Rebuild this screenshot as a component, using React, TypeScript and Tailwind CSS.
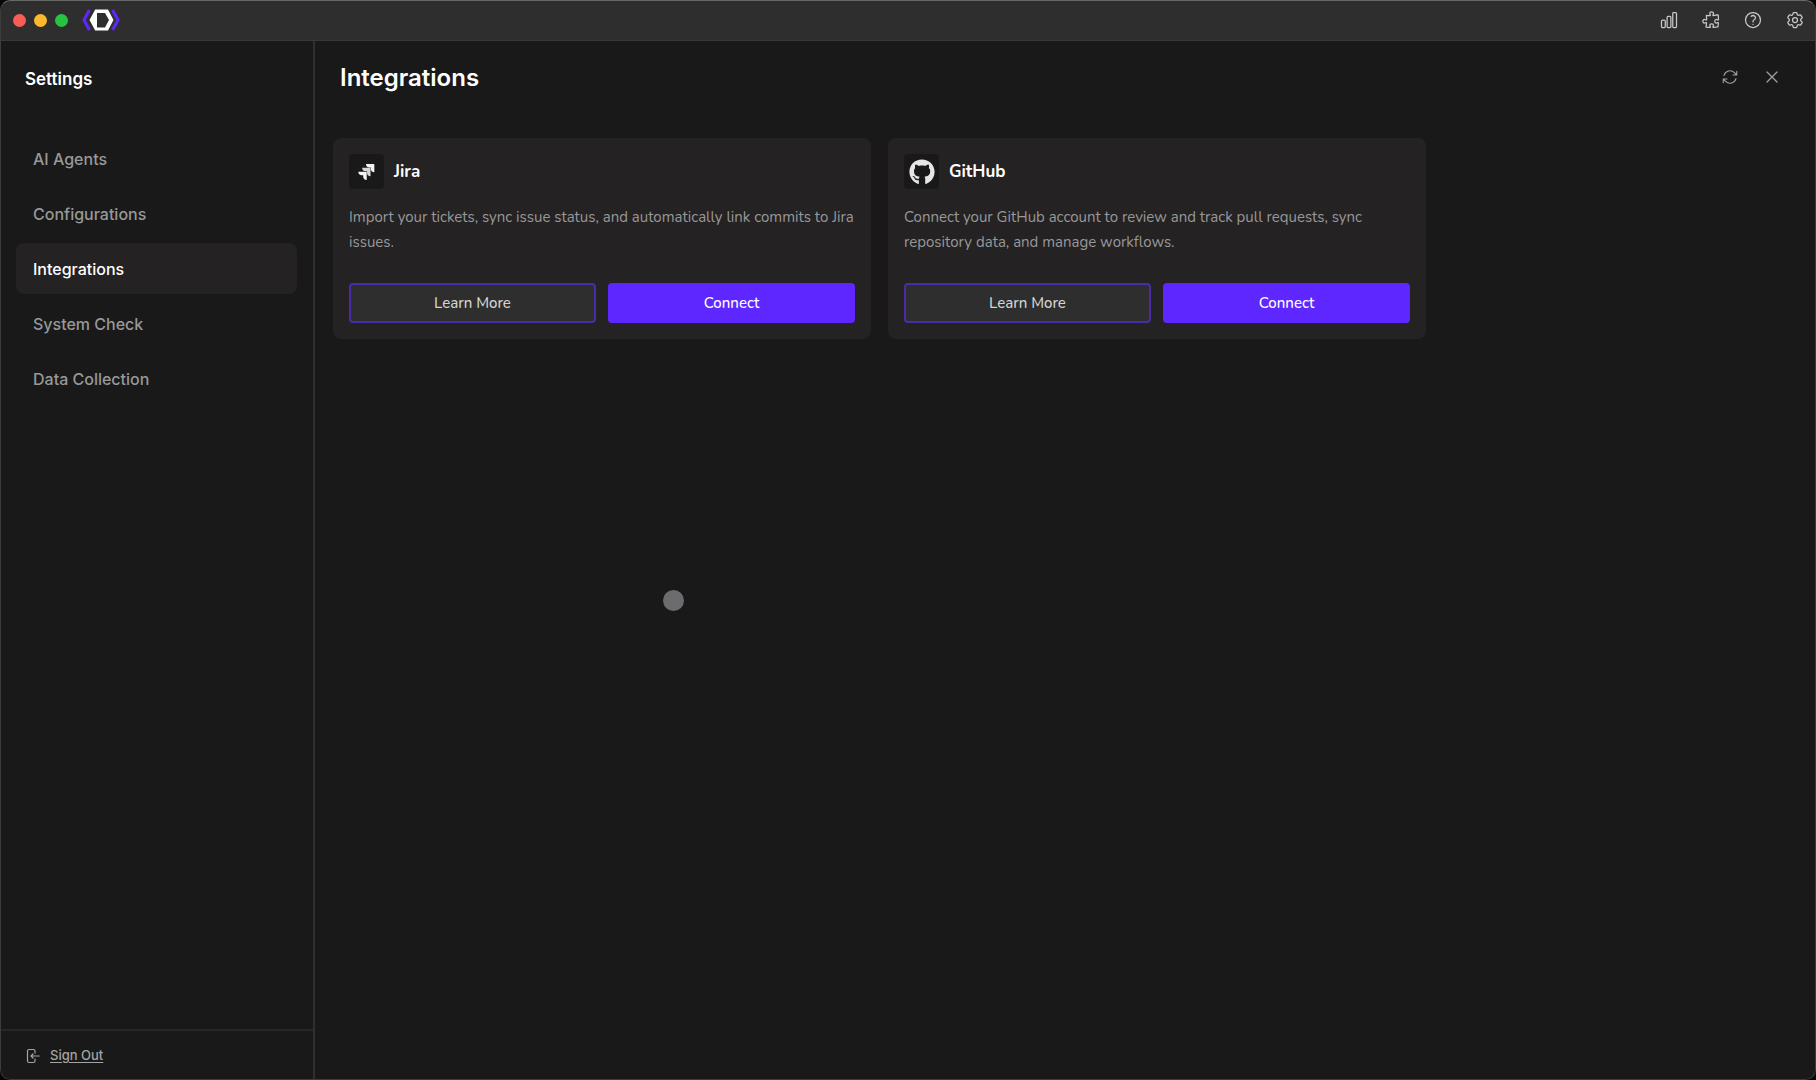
import React from "react";
import {
    HiOutlineChartBar,
    HiOutlinePuzzlePiece,
    HiOutlineQuestionMarkCircle,
    HiOutlineCog6Tooth,
    HiOutlineArrowPath,
    HiOutlineXMark,
} from "react-icons/hi2";
import { FaGithub } from "react-icons/fa";

interface Integration {
    name: string;
    description: string;
    icon: React.ReactNode;
}

interface IconButtonProps {
    label: string;
    children: React.ReactNode;
}

const navItems = ["AI Agents", "Configurations", "Integrations", "System Check", "Data Collection"];

const Logo = () => (
    <svg viewBox="0 0 40 24" className="h-6 w-10" aria-hidden="true">
        <path d="M8.500 2 3 12l5.500 10M31.500 2 37 12l-5.500 10" fill="none" stroke="#5b28f5" strokeWidth="3.200" />
        <path fillRule="evenodd" d="M14.200 1.500h12.800L32.500 12l-5.500 10.500H14.200L8.500 12ZM16 5v14.500h8L28 12L24 5Z" fill="#ffffff" />
    </svg>
);

const SignOutIcon = () => (
    <svg viewBox="0 0 14 16" className="h-4 w-[14px]" fill="none" stroke="currentColor" strokeWidth="1.200" strokeLinecap="round" strokeLinejoin="round" aria-hidden="true">
        <path d="M9 5V3A1.500 1.500 0 0 0 7.500 1.500H3A1.500 1.500 0 0 0 1.500 3v10A1.500 1.500 0 0 0 3 14.500h4.500A1.500 1.500 0 0 0 9 13v-2M13.200 8H5M7 6L5 8l2 2" />
    </svg>
);

const JiraIcon = () => (
    <svg viewBox="0 0 26 24" className="h-4 w-[18px]" fill="#f4f4f4" aria-hidden="true">
        <path d="M11.571 11.513H0a5.218 5.218 0 0 0 5.232 5.215h2.130v2.057A5.215 5.215 0 0 0 12.575 24V12.518a1.005 1.005 0 0 0-1.005-1.005z" />
        <path d="M17.294 5.757H5.736a5.215 5.215 0 0 0 5.215 5.214h2.129v2.058a5.218 5.218 0 0 0 5.215 5.214V6.758a1.001 1.001 0 0 0-1.001-1.001z" fill="#d6d6d6" />
        <path d="M23.013 0H11.455a5.215 5.215 0 0 0 5.215 5.215h2.129v2.057A5.215 5.215 0 0 0 24 12.483V1.005A1.001 1.001 0 0 0 23.013 0Z" />
    </svg>
);

const integrations: Integration[] = [
    {
        name: "Jira",
        description: "Import your tickets, sync issue status, and automatically link commits to Jira issues.",
        icon: <JiraIcon />,
    },
    {
        name: "GitHub",
        description: "Connect your GitHub account to review and track pull requests, sync repository data, and manage workflows.",
        icon: <FaGithub className="h-[26px] w-[26px] text-[#e6e6e6]" />,
    },
];

const IconButton: React.FC<IconButtonProps> = ({ label, children }) => (
    <button type="button" aria-label={label} className="flex h-6 w-6 cursor-pointer items-center justify-center">
        {children}
    </button>
);

const TitleBar = () => (
    <header className="flex h-[41px] shrink-0 items-center border-b border-[#383838] bg-[#2e2e2e] pr-[9px] pl-[13px]">
        <div className="flex gap-2">
            <span className="h-[13px] w-[13px] rounded-full bg-[#fb5d56]" />
            <span className="h-[13px] w-[13px] rounded-full bg-[#fcb92e]" />
            <span className="h-[13px] w-[13px] rounded-full bg-[#28c341]" />
        </div>
        <div className="ml-[13px]">
            <Logo />
        </div>
        <div className="ml-auto flex gap-[18px] text-[#c8c8c8]">
            <IconButton label="Usage"><HiOutlineChartBar className="h-5 w-5" /></IconButton>
            <IconButton label="Extensions"><HiOutlinePuzzlePiece className="h-5 w-5" /></IconButton>
            <IconButton label="Help"><HiOutlineQuestionMarkCircle className="h-5 w-5" /></IconButton>
            <IconButton label="Settings"><HiOutlineCog6Tooth className="h-5 w-5" /></IconButton>
        </div>
    </header>
);

const Sidebar = () => (
    <aside className="flex w-[315px] shrink-0 flex-col border-r-2 border-[#2f2f2f]">
        <h2 className="px-[25px] pt-[26px] text-[17px] leading-6 font-semibold text-white">Settings</h2>
        <nav className="mt-[42px] flex flex-col gap-1 px-4">
            {navItems.map((item) => (
                <a
                    key={item}
                    href="#"
                    className={`flex h-[51px] items-center rounded-lg px-[17px] text-base font-medium ${item === "Integrations" ? "bg-[#242223] text-white" : "text-[#989898]"}`}
                >
                    {item}
                </a>
            ))}
        </nav>
        <div className="mt-auto flex h-[51px] items-center border-t-2 border-[#272727] px-[26px]">
            <a href="#" className="flex items-center gap-[10px] text-[13px] font-medium text-[#a4a4a4]">
                <SignOutIcon />
                <span className="underline underline-offset-2">Sign Out</span>
            </a>
        </div>
    </aside>
);

const IntegrationCard: React.FC<Integration> = ({ name, description, icon }) => (
    <article className="rounded-lg bg-[#242223] p-4 font-['Nunito','Open_Sans',sans-serif]">
        <div className="flex items-center gap-[10px]">
            <div className="flex h-[35px] w-[35px] items-center justify-center rounded bg-[#191919]">{icon}</div>
            <h3 className="text-[17px] leading-6 font-bold text-white">{name}</h3>
        </div>
        <p className="mt-4 text-[15px] leading-[25px] text-[#989898]">{description}</p>
        <div className="mt-7 grid grid-cols-2 gap-3 text-[15px] font-medium">
            <button type="button" className="h-10 cursor-pointer rounded border-2 border-[#4a2ba8] bg-[#2e2e2e] text-[#d4d4d4]">Learn More</button>
            <button type="button" className="h-10 cursor-pointer rounded bg-[#5e27ff] text-white">Connect</button>
        </div>
    </article>
);

const App = () => {
    return (
        <div className="bg-[#050505]">
            <div className="relative flex min-h-screen flex-col overflow-hidden rounded-[10px] bg-[#191919] font-['Inter',sans-serif]">
                <TitleBar />
                <div className="flex flex-1">
                    <Sidebar />
                    <main className="min-w-0 flex-1">
                        <div className="flex items-start pt-5 pr-8 pl-[25px]">
                            <h1 className="text-2xl leading-[34px] font-semibold text-white">Integrations</h1>
                            <div className="ml-auto flex gap-[18px] pt-1 text-[#a0a0a0]">
                                <IconButton label="Refresh"><HiOutlineArrowPath className="h-[18px] w-[18px]" /></IconButton>
                                <IconButton label="Close"><HiOutlineXMark className="h-5 w-5" /></IconButton>
                            </div>
                        </div>
                        <section className="mt-[43px] grid max-w-[1129px] grid-cols-2 gap-[17px] px-[18px]">
                            {integrations.map((integration) => (
                                <IntegrationCard key={integration.name} {...integration} />
                            ))}
                        </section>
                    </main>
                </div>
                {/* Pointer marker and window outline */}
                <span className="pointer-events-none absolute top-[590px] left-[663px] h-[21px] w-[21px] rounded-full bg-[#6c6b6d]" />
                <div className="pointer-events-none absolute inset-0 rounded-[10px] border border-[#3c3c3c] border-t-[#686868]" />
            </div>
        </div>
    );
};

export default App;
